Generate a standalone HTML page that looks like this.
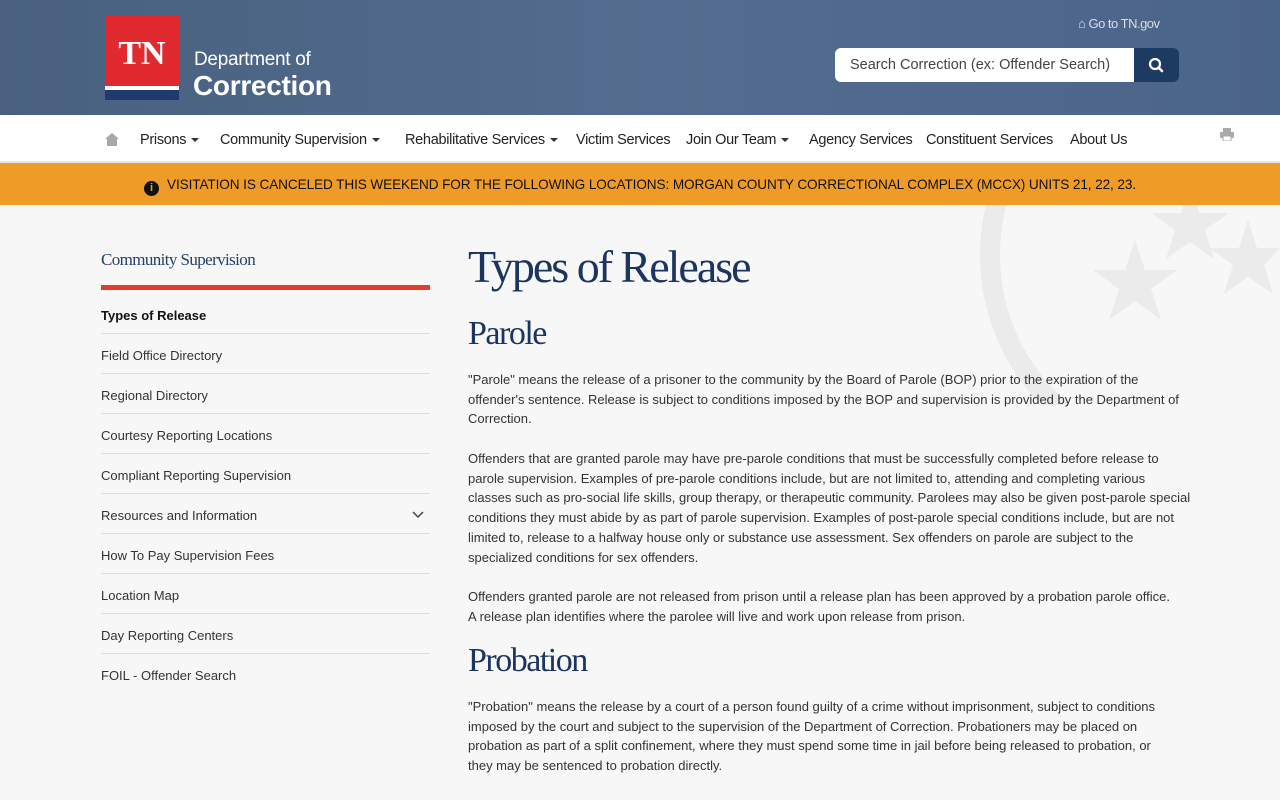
<!DOCTYPE html>
<html><head><meta charset="utf-8"><style>
*{box-sizing:border-box;margin:0;padding:0}
body{width:1280px;height:800px;overflow:hidden;background:#f7f7f7;font-family:"Liberation Sans",sans-serif;color:#333;position:relative}
.hdr{position:absolute;left:0;top:0;width:1280px;height:115px;background:linear-gradient(90deg,#49617f,#536c8f 50%,#4b6489);}
.logo{position:absolute;left:105px;top:16px;width:74px;height:84px}
.dept{position:absolute;left:194px;top:49px;color:#fff;font-size:19px;line-height:22px;letter-spacing:-.3px}
.corr{position:absolute;left:193px;top:70px;color:#fff;font-size:28px;font-weight:bold;line-height:32px;letter-spacing:-.3px}
.tngov{position:absolute;left:1078px;top:16px;color:#d8dfe9;font-size:13px;letter-spacing:-.5px}
.search{position:absolute;left:835px;top:48px;width:300px;height:34px;background:#fff;border-radius:6px 0 0 6px;font-size:14.5px;color:#444;padding:9px 0 0 15px;white-space:nowrap;overflow:hidden}
.sbtn{position:absolute;left:1134px;top:48px;width:45px;height:34px;background:#1d3a63;border-radius:0 6px 6px 0}
.nav{position:absolute;left:0;top:115px;width:1280px;height:48px;background:#fff;border-bottom:2px solid #e6e6e6}
.nav span{position:absolute;top:17px;font-size:14.5px;color:#222;white-space:nowrap;letter-spacing:-.3px}
.car{display:inline-block;border-left:4px solid transparent;border-right:4px solid transparent;border-top:4px solid #333;vertical-align:middle;margin-left:5px}
.ban{position:absolute;left:0;top:163px;width:1280px;height:42px;background:#ef9b27;font-size:13.6px;color:#111;padding-top:14px;text-align:center;letter-spacing:-.1px}
.side{position:absolute;left:101px;top:250px;width:329px}
.side h3{font-family:"Liberation Serif",serif;font-weight:normal;color:#24416a;font-size:17px;letter-spacing:-.6px;height:35px}
.side .bar{height:5px;background:#e53c2e;margin-bottom:4px}
.side div.it{height:40px;border-bottom:1px solid #ddd;font-size:13px;padding-top:14px;color:#333;position:relative}
.main{position:absolute;left:468px;top:0;width:720px}
h1{position:absolute;top:240px;font-family:"Liberation Serif",serif;font-weight:normal;color:#1b3560;font-size:46px;letter-spacing:-2px;white-space:nowrap}
h2{position:absolute;font-family:"Liberation Serif",serif;font-weight:normal;color:#1b3560;font-size:34px;letter-spacing:-1.5px;white-space:nowrap}
p{position:absolute;font-size:13px;line-height:19.7px;color:#333;white-space:nowrap}
</style></head><body>
<div class="hdr"></div>
<svg class="logo" viewBox="0 0 74 84"><rect width="74" height="70" fill="#e02a2f"/><rect y="70" width="74" height="4" fill="#fff"/><rect y="74" width="74" height="10" fill="#1e3a6e"/><text x="37" y="48" text-anchor="middle" fill="#fff" font-family="Liberation Serif" font-weight="bold" font-size="34">TN</text></svg>
<div class="dept">Department of</div>
<div class="corr">Correction</div>
<div class="tngov">&#8962; Go to TN.gov</div>
<div class="search">Search Correction (ex: Offender Search)</div>
<div class="sbtn"><svg width="45" height="34" viewBox="0 0 45 34"><circle cx="21" cy="16" r="5" fill="none" stroke="#fff" stroke-width="2.2"/><line x1="24.5" y1="19.5" x2="28" y2="23" stroke="#fff" stroke-width="2.6" stroke-linecap="round"/></svg></div>
<div class="nav">
<svg style="position:absolute;left:105px;top:18px" width="14" height="13" viewBox="0 0 14 13"><path d="M7 0L0 6h2v7h10V6h2z" fill="#a8a8a8"/></svg>
<span style="left:140px">Prisons<i class="car"></i></span>
<span style="left:220px">Community Supervision<i class="car"></i></span>
<span style="left:405px">Rehabilitative Services<i class="car"></i></span>
<span style="left:576px">Victim Services</span>
<span style="left:686px">Join Our Team<i class="car"></i></span>
<span style="left:809px">Agency Services</span>
<span style="left:926px">Constituent Services</span>
<span style="left:1070px">About Us</span>
<svg style="position:absolute;left:1220px;top:13px" width="14" height="13" viewBox="0 0 14 13"><rect x="3" y="0" width="8" height="4" fill="#aaa"/><rect x="0" y="4" width="14" height="6" rx="1" fill="#aaa"/><rect x="3" y="8" width="8" height="5" fill="#fff" stroke="#aaa"/></svg>
</div>
<div class="ban"><span style="display:inline-block;width:15px;height:15px;border-radius:50%;background:#111;color:#ef9b27;font-size:11px;font-weight:bold;line-height:15px;vertical-align:-2px;margin-right:8px">i</span>VISITATION IS CANCELED THIS WEEKEND FOR THE FOLLOWING LOCATIONS: MORGAN COUNTY CORRECTIONAL COMPLEX (MCCX) UNITS 21, 22, 23.</div>
<svg style="position:absolute;left:980px;top:205px" width="300" height="200" viewBox="0 0 300 200"><circle cx="215" cy="50" r="205" fill="none" stroke="#ebebeb" stroke-width="20"/><g fill="#ebebeb"><polygon points="155,35 165,65 197,65 171,84 181,115 155,96 129,115 139,84 113,65 145,65"/><polygon points="210,-20 219,8 249,8 225,25 234,54 210,37 186,54 195,25 171,8 201,8"/><polygon points="268,15 277,43 300,43 284,60 293,89 268,72 244,89 253,60 229,43 259,43"/></g></svg>
<div class="side">
<h3>Community Supervision</h3>
<div class="bar"></div>
<div class="it" style="font-weight:bold;color:#111">Types of Release</div>
<div class="it">Field Office Directory</div>
<div class="it">Regional Directory</div>
<div class="it">Courtesy Reporting Locations</div>
<div class="it">Compliant Reporting Supervision</div>
<div class="it">Resources and Information<svg style="position:absolute;right:6px;top:17px" width="12" height="8" viewBox="0 0 12 8"><path d="M1 1l5 5 5-5" fill="none" stroke="#444" stroke-width="1.5"/></svg></div>
<div class="it">How To Pay Supervision Fees</div>
<div class="it">Location Map</div>
<div class="it">Day Reporting Centers</div>
<div class="it" style="border:none">FOIL - Offender Search</div>
</div>
<div class="main">
<h1>Types of Release</h1>
<h2 style="top:315px">Parole</h2>
<p style="top:370px">"Parole" means the release of a prisoner to the community by the Board of Parole (BOP) prior to the expiration of the<br>offender's sentence. Release is subject to conditions imposed by the BOP and supervision is provided by the Department of<br>Correction.</p>
<p style="top:449px">Offenders that are granted parole may have pre-parole conditions that must be successfully completed before release to<br>parole supervision. Examples of pre-parole conditions include, but are not limited to, attending and completing various<br>classes such as pro-social life skills, group therapy, or therapeutic community. Parolees may also be given post-parole special<br>conditions they must abide by as part of parole supervision. Examples of post-parole special conditions include, but are not<br>limited to, release to a halfway house only or substance use assessment. Sex offenders on parole are subject to the<br>specialized conditions for sex offenders.</p>
<p style="top:587px">Offenders granted parole are not released from prison until a release plan has been approved by a probation parole office.<br>A release plan identifies where the parolee will live and work upon release from prison.</p>
<h2 style="top:642px">Probation</h2>
<p style="top:697px">"Probation" means the release by a court of a person found guilty of a crime without imprisonment, subject to conditions<br>imposed by the court and subject to the supervision of the Department of Correction. Probationers may be placed on<br>probation as part of a split confinement, where they must spend some time in jail before being released to probation, or<br>they may be sentenced to probation directly.</p>
</div>
</body></html>
